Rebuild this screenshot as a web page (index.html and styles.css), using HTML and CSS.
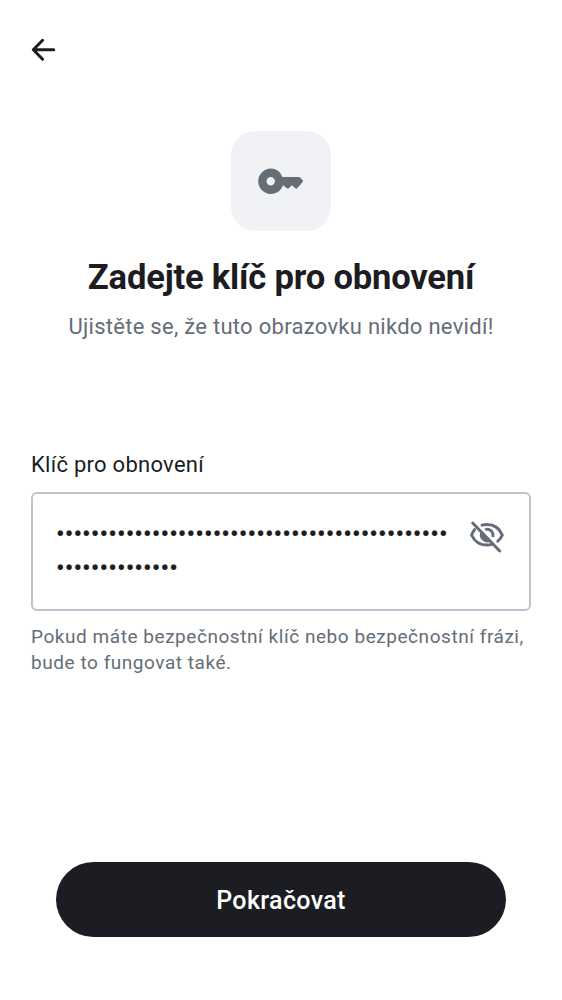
FILE: index.html
```html
<!DOCTYPE html>
<html lang="cs">
<head>
<meta charset="utf-8">
<title>Klíč pro obnovení</title>
<link rel="stylesheet" href="styles.css">
</head>
<body>
<main class="screen">
  <header class="topbar">
    <svg class="back" viewBox="0 0 30 30"><path d="M25.8 14.8H5.5M14.6 5.3 5.3 14.8l9.3 9.5"/></svg>
  </header>
  <div class="badge">
    <svg class="key" viewBox="0 0 50 50"><path fill-rule="evenodd" d="M14.7 12.6a12.7 12.7 0 0 1 11.7 8.4H42.6q.9 0 1.5.6l2.4 2.5q1 1.1 0 2.2l-5.1 5.8q-1.1 1.1-2.3 0L35.8 29.2l-2.8 2.9q-1.1 1.1-2.3 0L27 29.2A12.7 12.7 0 1 1 14.7 12.6ZM14.7 21.1a4.2 4.2 0 1 0 0 8.4 4.2 4.2 0 0 0 0-8.4Z"/></svg>
  </div>
  <h1 class="title">Zadejte klíč pro obnovení</h1>
  <p class="subtitle">Ujistěte se, že tuto obrazovku nikdo nevidí!</p>
  <section class="form">
    <div class="label">Klíč pro obnovení</div>
    <div class="field">
      <div class="secret">•••••••••••••••••••••••••••••••••••••••••••••<br>••••••••••••••</div>
      <svg class="eye" viewBox="0 0 38 38">
        <path class="line" d="M5.7 5 32.7 33M15 7.1Q17.4 6.4 20 6.4C26.7 6.4 32.5 10.3 35.3 17Q33.8 20.7 30.8 23.2M7.6 11.6Q5.7 14 4.6 17C7.4 23.3 13.2 27.1 20 27.1Q22.8 27.1 25.1 26.4"/>
        <path class="line" d="M19.3 11.2C23.3 10.9 26.4 14 26 17.8"/>
        <path d="M13.8 13.4A7.4 7.4 0 0 0 23.7 23.5Z"/>
      </svg>
    </div>
    <p class="hint">Pokud máte bezpečnostní klíč nebo bezpečnostní frázi,<br>bude to fungovat také.</p>
  </section>
  <button class="submit">Pokračovat</button>
</main>
</body>
</html>
```
FILE: styles.css
```css
* { box-sizing: border-box; }
body { margin: 0; background: #fff; font-family: Roboto, sans-serif; color: #1b1d22; }
.screen { display: flex; flex-direction: column; width: 562px; height: 1000px; padding: 35px 31px 63px; white-space: nowrap; }
.topbar { height: 96px; margin-left: -3px; }
.back { display: block; width: 30px; height: 30px; fill: none; stroke: currentColor; stroke-width: 3; stroke-linecap: round; stroke-linejoin: round; }
svg { fill: currentColor; flex: none; }
.badge { display: flex; align-items: center; justify-content: center; align-self: center; width: 100px; height: 100px; border-radius: 24px; background: #f0f2f5; color: #656d77; }
.key { width: 50px; height: 50px; }
.title { margin: 25px 0 0; text-align: center; font-size: 34.6px; line-height: 42px; font-weight: 700; letter-spacing: -.2px; }
.subtitle { margin: 13px 0 0; text-align: center; font-size: 22px; line-height: 31px; color: #656d77; letter-spacing: .28px; }
.form { margin-top: 107px; }
.label { font-size: 22px; line-height: 31px; letter-spacing: .27px; }
.field { display: flex; justify-content: space-between; height: 119px; margin-top: 12px; padding: 23px 23px 0; border: 2px solid #bdc4cf; border-radius: 6px; }
.secret { font-size: 25.8px; line-height: 34px; letter-spacing: 0; -webkit-text-stroke: .2px currentColor; }
.eye { width: 38px; height: 38px; margin: 1px 1px 0 0; color: #656d77; }
.line { fill: none; stroke: currentColor; stroke-width: 3; stroke-linecap: round; }
.hint { margin: 13px 0 0; font-size: 19px; line-height: 26px; letter-spacing: .55px; color: #656d77; }
.submit { width: 450px; height: 75px; margin: auto auto 0; padding: 2px 0 0; border: 0; border-radius: 38px; background: #1b1d22; color: #fff; font: 500 25px/34px Roboto, sans-serif; letter-spacing: .36px; }
```
